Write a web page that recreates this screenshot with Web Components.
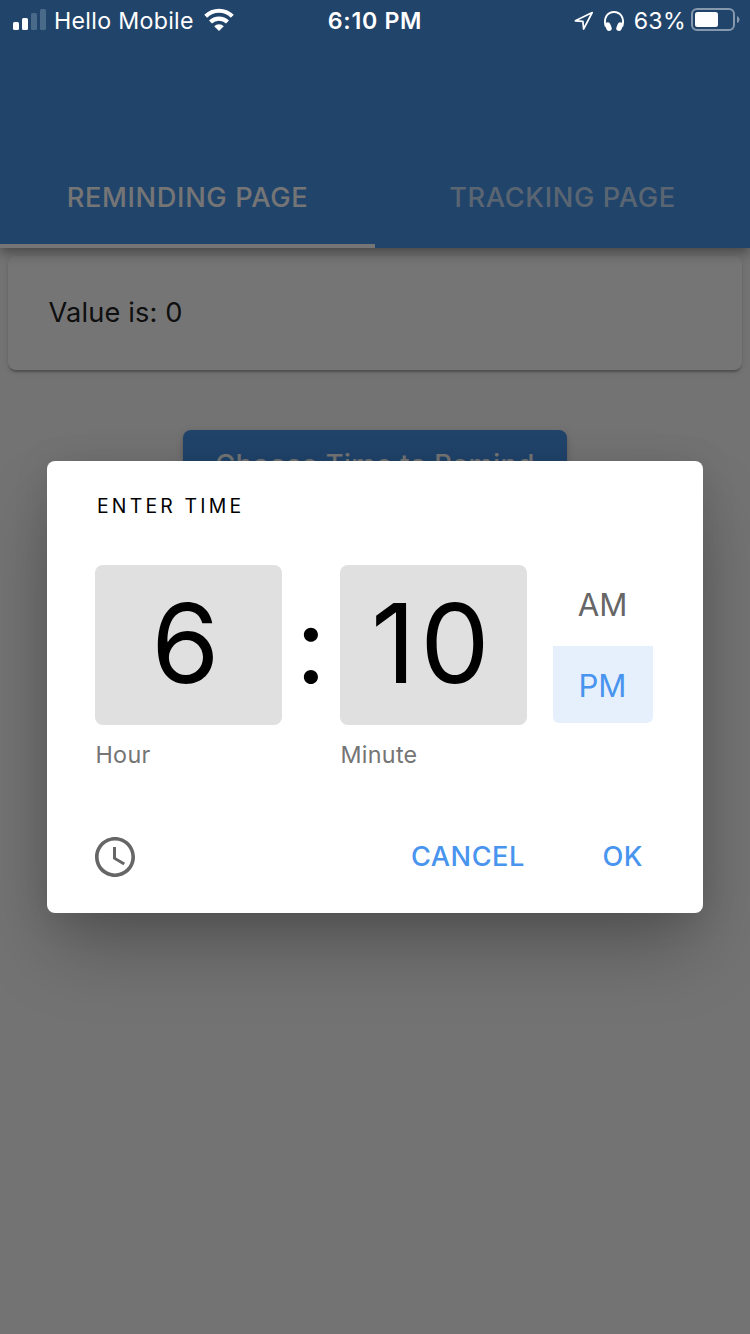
<!DOCTYPE html>
<html lang="en">
<head>
<meta charset="utf-8">
<title>Reminder</title>
<style>
html,body{margin:0;height:100%;overflow:hidden}
body{font-family:Inter,"Liberation Sans",sans-serif;background:#fafafa}
</style>
</head>
<body>
<reminder-app></reminder-app>
<script>
const define = (name, html) => customElements.define(name, class extends HTMLElement {
  constructor() {
    super();
    const t = document.createElement('template');
    t.innerHTML = html;
    this.attachShadow({mode: 'open'}).append(t.content.cloneNode(true));
  }
});

define('status-bar', `
<style>
:host{display:grid;grid-template-columns:1fr auto 1fr;height:42px;color:#fff;font-size:23.2px;line-height:42px;white-space:pre}
.l,.r{display:flex;align-items:flex-start}
.l{padding-left:13px}
.r{justify-content:flex-end;padding-right:10px}
svg{display:block;flex:none}
.carrier{margin-left:7px;letter-spacing:.3px}
.time{font-weight:570;letter-spacing:.7px}
.pct{margin-left:10px;letter-spacing:.3px}
</style>
<div class="l">
<svg width="34" height="42" viewBox="0 0 34 42" fill="#fff"><rect y="22" width="6" height="8" rx="1.5"/><rect x="9" y="18" width="6" height="12" rx="1.5"/><g fill="#4a6a89"><rect x="18" y="13" width="6" height="17" rx="1.5"/><rect x="27" y="9" width="6" height="21" rx="1.5"/></g></svg>
<span class="carrier">Hello Mobile</span>
<svg style="margin-left:10px" width="30" height="42" viewBox="0 0 30 42" fill="none" stroke="#fff" stroke-width="4.2"><path d="M1.700 16.200a19 19 0 0 1 26.600 0"/><path d="M6.500 22a12.200 12.200 0 0 1 17 0"/><path d="M10.200 26.300a6.900 6.900 0 0 1 9.600 0L15 31Z" fill="#fff" stroke="none"/></svg>
</div>
<div class="time">6:10 PM</div>
<div class="r">
<svg width="20" height="42" viewBox="0 0 20 42" fill="none" stroke="#fff" stroke-width="1.7" stroke-linejoin="round"><path d="M1.400 20.800 18.200 12.600 9.600 29 8.900 21.400Z"/></svg>
<svg style="margin-left:10px" width="20" height="42" viewBox="0 0 20 42" fill="none" stroke="#fff"><path d="M1.700 26.500C-.8 18 3.400 12 10 12s10.800 6 8.300 14.500" stroke-width="1.9"/><path d="M3.700 25 5 28.300M16.300 25 15 28.300" stroke-width="5.400" stroke-linecap="round"/></svg>
<span class="pct">63%</span>
<svg style="margin-left:5px" width="49" height="42" viewBox="0 0 49 42"><g opacity=".45"><rect x="1" y="9" width="42" height="21" rx="5" fill="none" stroke="#fff" stroke-width="2"/><path d="M46 16v7q2.500-1 2.500-3.500T46 16Z" fill="#fff"/></g><rect x="4" y="12" width="23" height="15" rx="2.500" fill="#fff"/></svg>
</div>`);

define('tab-item', `
<style>
:host{flex:1;display:flex;justify-content:center;box-sizing:border-box;height:96px;border-bottom:4px solid transparent;color:rgba(255,255,255,.7);font-size:27.2px;font-weight:550;line-height:91px;letter-spacing:.65px;white-space:nowrap}
:host([selected]){border-color:#fff;color:#fff}
</style><slot></slot>`);

define('app-header', `
<style>
:host{display:flex;align-items:flex-end;box-sizing:border-box;height:248px;background:#4894ea;position:relative;z-index:1;box-shadow:0 4px 8px -2px rgba(0,0,0,.2),0 8px 10px rgba(0,0,0,.14),0 2px 20px rgba(0,0,0,.12)}
</style><slot></slot>`);

define('value-card', `
<style>
:host{display:block;margin:8px 8px 0;height:114px;border-radius:8px;background:#fff;box-shadow:0 4px 2px -2px rgba(0,0,0,.16),0 2px 2px rgba(0,0,0,.12),0 2px 6px rgba(0,0,0,.1);padding-left:40.500px;font-size:27.2px;line-height:113px;letter-spacing:.15px;color:#222}
</style><slot></slot>`);

define('raised-button', `
<style>
:host{display:block;width:384px;height:72px;margin:60px auto 0;border-radius:8px;background:#4894ea;color:#fff;text-align:center;font-size:27.2px;font-weight:550;line-height:70px;letter-spacing:.5px;box-shadow:0 6px 2px -4px rgba(0,0,0,.2),0 4px 4px rgba(0,0,0,.14),0 2px 10px rgba(0,0,0,.12)}
</style><slot></slot>`);

define('time-field', `
<style>
:host{display:block;width:187px}
.box{height:160px;border-radius:8px;background:#e0e0e0;color:#000;font-size:110px;line-height:156px;letter-spacing:4.500px;text-align:center;box-sizing:border-box;padding-right:2px}
.label{margin-top:18px;font-size:23.3px;line-height:24px;color:#757575;letter-spacing:.3px;padding-left:.5px}
</style><div class="box"><slot></slot></div><div class="label"><slot name="label"></slot></div>`);

define('period-option', `
<style>
:host{display:block;width:100px;height:77px;box-sizing:border-box;padding-right:1px;text-align:center;font-size:31.2px;line-height:80px;color:#666}
:host([selected]){background:#e6f0fd;color:#4894ee;border-radius:0 0 6px 6px}
</style><slot></slot>`);

define('text-action', `
<style>
:host{display:block;font-size:27.2px;font-weight:510;line-height:40px;letter-spacing:.5px;color:#4894ee;white-space:nowrap}
</style><slot></slot>`);

define('time-dialog', `
<style>
:host{display:block;box-sizing:border-box;width:656px;height:452px;margin-top:26px;padding:33px 50px 0 48px;border-radius:8px;background:#fff;box-shadow:0 40px 70px -8px rgba(0,0,0,.27),0 4px 36px rgba(0,0,0,.1)}
.title{font-size:19.4px;line-height:25px;height:24px;letter-spacing:3.200px;padding-left:2px;color:#000}
.row{display:flex;margin-top:47px}
.colon{width:58px;height:160px;text-align:center;font-size:107px;line-height:159px;color:#000}
.periods{margin-left:26px;display:flex;flex-direction:column;gap:4px}
.actions{display:flex;align-items:center;margin-top:66px;height:48px}
.cancel{margin-left:276px}.ok{margin-left:77.500px}
svg{display:block}
</style>
<div class="title">ENTER TIME</div>
<div class="row">
<time-field>6<span slot="label">Hour</span></time-field>
<div class="colon">:</div>
<time-field>10<span slot="label">Minute</span></time-field>
<div class="periods"><period-option>AM</period-option><period-option selected>PM</period-option></div>
</div>
<div class="actions">
<svg width="40" height="40" viewBox="2 2 20 20" fill="#666"><path d="M11.990 2C6.470 2 2 6.480 2 12s4.470 10 9.990 10C17.520 22 22 17.520 22 12S17.520 2 11.990 2zM12 20.200c-4.530 0-8.200-3.670-8.200-8.200s3.670-8.200 8.200-8.200 8.200 3.670 8.200 8.200-3.670 8.200-8.200 8.200zm.5-13.200H11v6l5.250 3.150.75-1.230-4.500-2.670z"/></svg>
<text-action class="cancel">CANCEL</text-action><text-action class="ok">OK</text-action>
</div>`);

define('reminder-app', `
<style>
:host{display:grid;width:750px;height:1334px}
.page,.overlay{grid-area:1/1}
.overlay{z-index:2;display:grid;grid-template-rows:42px 1fr;background:rgba(0,0,0,.54)}
.center{display:flex;justify-content:center;align-items:center;margin-top:-28px}
status-bar{z-index:1}
</style>
<div class="page">
<app-header><tab-item selected>REMINDING PAGE</tab-item><tab-item>TRACKING PAGE</tab-item></app-header>
<value-card>Value is: 0</value-card>
<raised-button>Choose Time to Remind</raised-button>
</div>
<div class="overlay"><status-bar></status-bar><div class="center"><time-dialog></time-dialog></div></div>`);
</script>
</body>
</html>
